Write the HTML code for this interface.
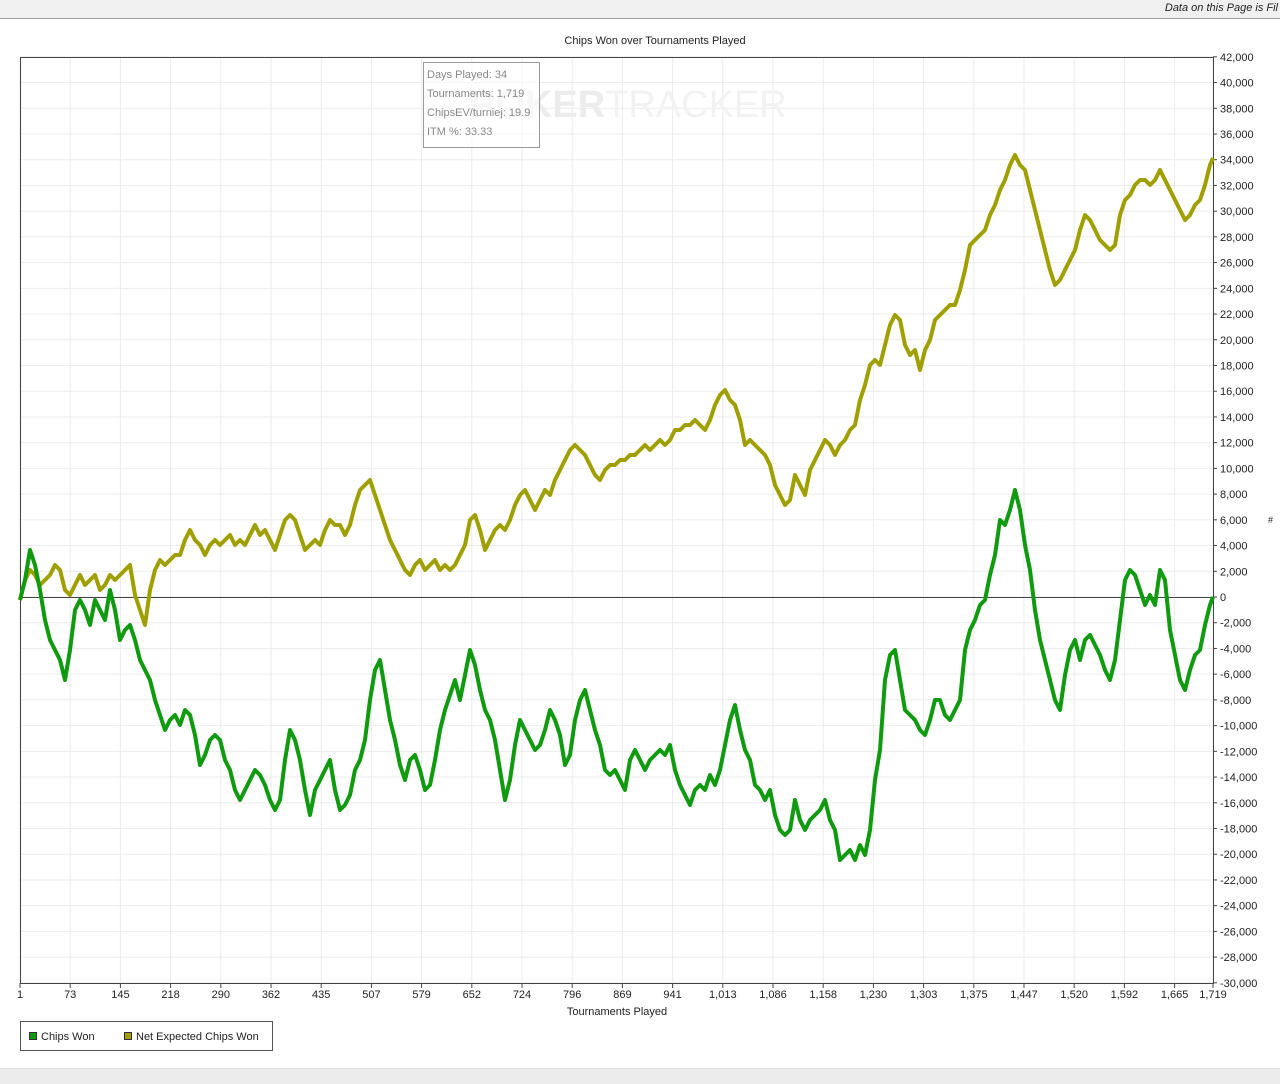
<!DOCTYPE html>
<html><head><style>
body{margin:0;width:1280px;height:1083px;background:#fff;overflow:hidden;font-family:"Liberation Sans",sans-serif;position:relative}
.top{position:absolute;left:0;top:0;width:1280px;height:18px;background:#f0f0f0;border-bottom:1px solid #a0a0a0}
.top span{position:absolute;right:2px;top:2px;font-size:11px;font-style:italic;color:#222}
.bot{position:absolute;left:0;top:1068px;width:1280px;height:15px;background:#ececec;border-top:1px solid #ddd}
svg{position:absolute;left:0;top:0}
</style></head><body>
<div class="top"><span>Data on this Page is Fil</span></div>
<svg width="1280" height="1083" font-family="Liberation Sans, sans-serif" font-size="11">
<text x="655" y="44" text-anchor="middle" fill="#222" font-size="11">Chips Won over Tournaments Played</text>
<g id="grid" stroke="#ebebeb" stroke-width="1"></g>
<g id="lab" fill="#222"></g>
<rect x="20.5" y="57.5" width="1193" height="926" fill="none" stroke="#444"/>
<line x1="20" y1="597.5" x2="1213" y2="597.5" stroke="#444"/>
<text x="470" y="117" font-size="38" fill="#ececec"><tspan font-weight="bold">POKER</tspan><tspan fill="#f2f2f2">TRACKER</tspan></text>
<rect x="423.5" y="62.5" width="116" height="85" fill="#fff" fill-opacity="0.6" stroke="#999"/>
<g fill="#888" font-size="11"><text x="427" y="78">Days Played: 34</text><text x="427" y="97">Tournaments: 1,719</text><text x="427" y="116">ChipsEV/turniej: 19.9</text><text x="427" y="135">ITM %: 33.33</text></g>
<polyline fill="none" stroke="#9fa000" stroke-width="4" stroke-linejoin="round" points="20,600 25,580 30,570 35,575 40,585 45,580 50,575 55,565 60,570 65,590 70,595 75,585 80,575 85,585 90,580 95,575 100,590 105,585 110,575 115,580 120,575 125,570 130,565 135,595 140,610 145,625 150,590 155,570 160,560 165,565 170,560 175,555 180,555 185,540 190,530 195,540 200,545 205,555 210,545 215,540 220,545 225,540 230,535 235,545 240,540 245,545 250,535 255,525 260,535 265,530 270,540 275,550 280,535 285,520 290,515 295,520 300,535 305,550 310,545 315,540 320,545 325,530 330,520 335,525 340,525 345,535 350,525 355,505 360,490 365,485 370,480 375,495 380,510 385,525 390,540 395,550 400,560 405,570 410,575 415,565 420,560 425,570 430,565 435,560 440,570 445,565 450,570 455,565 460,555 465,545 470,520 475,515 480,530 485,550 490,540 495,530 500,525 505,530 510,520 515,505 520,495 525,490 530,500 535,510 540,500 545,490 550,495 555,480 560,470 565,460 570,450 575,445 580,450 585,455 590,465 595,475 600,480 605,470 610,465 615,465 620,460 625,460 630,455 635,455 640,450 645,445 650,450 655,445 660,440 665,445 670,440 675,430 680,430 685,425 690,425 695,420 700,425 705,430 710,420 715,405 720,395 725,390 730,400 735,405 740,420 745,445 750,440 755,445 760,450 765,455 770,465 775,485 780,495 785,505 790,500 795,475 800,485 805,495 810,470 815,460 820,450 825,440 830,445 835,455 840,445 845,440 850,430 855,425 860,400 865,385 870,365 875,360 880,365 885,345 890,325 895,315 900,320 905,345 910,355 915,350 920,370 925,350 930,340 935,320 940,315 945,310 950,305 955,305 960,290 965,270 970,245 975,240 980,235 985,230 990,215 995,205 1000,190 1005,180 1010,165 1015,155 1020,165 1025,170 1030,190 1035,210 1040,230 1045,250 1050,270 1055,285 1060,280 1065,270 1070,260 1075,250 1080,230 1085,215 1090,220 1095,230 1100,240 1105,245 1110,250 1115,245 1120,215 1125,200 1130,195 1135,185 1140,180 1145,180 1150,185 1155,180 1160,170 1165,180 1170,190 1175,200 1180,210 1185,220 1190,215 1195,205 1200,200 1205,185 1210,165 1213,158"/>
<polyline fill="none" stroke="#0f9a0f" stroke-width="4" stroke-linejoin="round" points="20,600 25,580 30,550 35,565 40,590 45,620 50,640 55,650 60,660 65,680 70,650 75,610 80,600 85,610 90,625 95,600 100,610 105,620 110,590 115,610 120,640 125,630 130,625 135,640 140,660 145,670 150,680 155,700 160,715 165,730 170,720 175,715 180,725 185,710 190,715 195,735 200,765 205,755 210,740 215,735 220,740 225,760 230,770 235,790 240,800 245,790 250,780 255,770 260,775 265,785 270,800 275,810 280,800 285,760 290,730 295,740 300,760 305,790 310,815 315,790 320,780 325,770 330,760 335,790 340,810 345,805 350,795 355,770 360,760 365,740 370,700 375,670 380,660 385,690 390,720 395,740 400,765 405,780 410,760 415,755 420,770 425,790 430,785 435,760 440,730 445,710 450,695 455,680 460,700 465,675 470,650 475,665 480,690 485,710 490,720 495,740 500,770 505,800 510,780 515,745 520,720 525,730 530,740 535,750 540,745 545,730 550,710 555,720 560,735 565,765 570,755 575,720 580,700 585,690 590,710 595,730 600,745 605,770 610,775 615,770 620,780 625,790 630,760 635,750 640,760 645,770 650,760 655,755 660,750 665,755 670,745 675,770 680,785 685,795 690,805 695,790 700,785 705,790 710,775 715,785 720,770 725,745 730,720 735,705 740,730 745,750 750,760 755,785 760,790 765,800 770,790 775,815 780,830 785,835 790,830 795,800 800,820 805,830 810,820 815,815 820,810 825,800 830,820 835,830 840,860 845,855 850,850 855,860 860,845 865,855 870,830 875,780 880,750 885,680 890,655 895,650 900,680 905,710 910,715 915,720 920,730 925,735 930,720 935,700 940,700 945,715 950,720 955,710 960,700 965,650 970,630 975,620 980,605 985,600 990,575 995,555 1000,520 1005,525 1010,510 1015,490 1020,510 1025,545 1030,570 1035,610 1040,640 1045,660 1050,680 1055,700 1060,710 1065,675 1070,650 1075,640 1080,660 1085,640 1090,635 1095,645 1100,655 1105,670 1110,680 1115,660 1120,620 1125,580 1130,570 1135,575 1140,590 1145,605 1150,595 1155,605 1160,570 1165,580 1170,630 1175,655 1180,680 1185,690 1190,670 1195,655 1200,650 1205,625 1210,605 1213,597"/>
<text x="617" y="1015" text-anchor="middle" fill="#222">Tournaments Played</text>
<text x="1268" y="523" fill="#222" font-size="9">#</text>
<rect x="20.5" y="1021.5" width="252" height="29" fill="#fff" stroke="#555"/>
<rect x="29.5" y="1032.5" width="7" height="7" fill="#0f9a0f" stroke="#333"/>
<text x="41" y="1040" fill="#222">Chips Won</text>
<rect x="124.5" y="1032.5" width="7" height="7" fill="#9fa000" stroke="#333"/>
<text x="136" y="1040" fill="#222">Net Expected Chips Won</text>
</svg>
<div class="bot"></div>
<script>
var g=document.getElementById('grid'),l=document.getElementById('lab'),s='';
var xs=['1','73','145','218','290','362','435','507','579','652','724','796','869','941','1,013','1,086','1,158','1,230','1,303','1,375','1,447','1,520','1,592','1,665','1,719'];
var t='';
for(var i=0;i<25;i++){var x=i<24?20+i*50.2:1213;s+='<line x1="'+x+'" y1="57" x2="'+x+'" y2="983"/>';t+='<line x1="'+x+'" y1="983" x2="'+x+'" y2="988" stroke="#444"/><text x="'+x+'" y="998" text-anchor="middle">'+xs[i]+'</text>';}
for(var v=42000;v>=-30000;v-=2000){var y=597-v*926/72000;s+='<line x1="20" y1="'+y+'" x2="1213" y2="'+y+'"/>';t+='<line x1="1213" y1="'+y+'" x2="1217" y2="'+y+'" stroke="#444"/><text x="1220" y="'+(y+4)+'">'+v.toLocaleString('en-US')+'</text>';}
g.innerHTML=s;l.innerHTML=t;
</script>
</body></html>
